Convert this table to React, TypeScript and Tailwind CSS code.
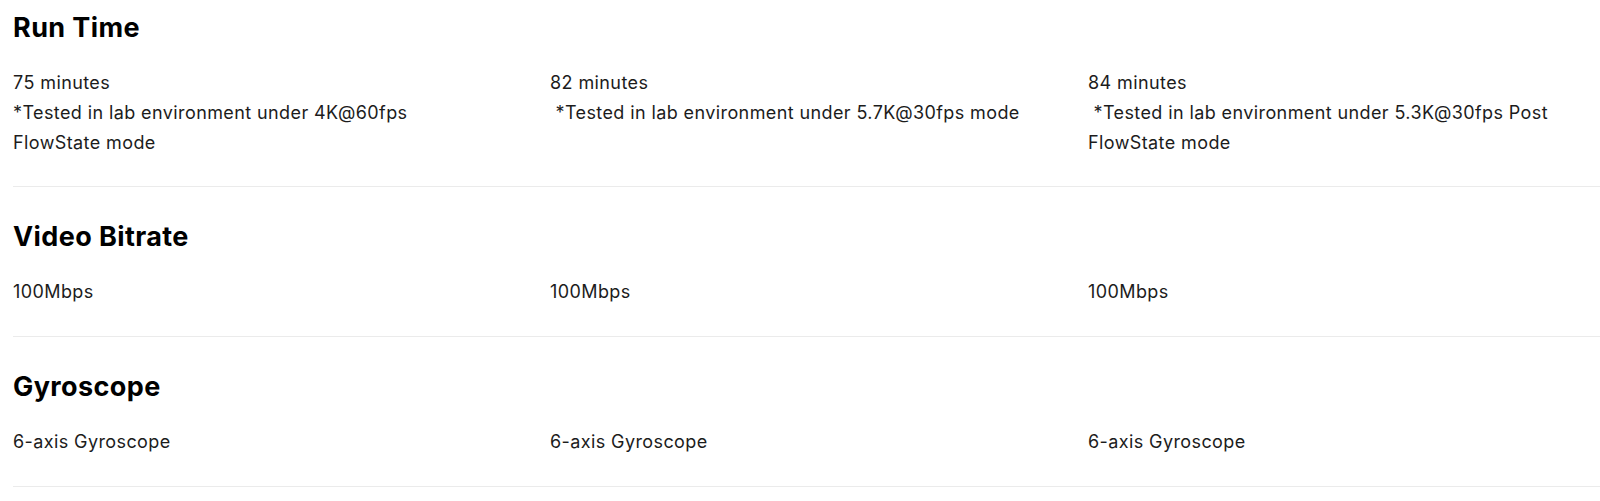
const specs = [
  {
    title: 'Run Time',
    first: true,
    cols: [
      ['75 minutes', '*Tested in lab environment under 4K@60fps', 'FlowState mode'],
      ['82 minutes', '\u00a0*Tested in lab environment under 5.7K@30fps mode'],
      ['84 minutes', '\u00a0*Tested in lab environment under 5.3K@30fps Post', 'FlowState mode'],
    ],
  },
  {
    title: 'Video Bitrate',
    cols: [['100Mbps'], ['100Mbps'], ['100Mbps']],
  },
  {
    title: 'Gyroscope',
    cols: [['6-axis Gyroscope'], ['6-axis Gyroscope'], ['6-axis Gyroscope']],
  },
];

const SpecRow = ({ title, cols, first }: { title: string; cols: string[][]; first?: boolean }) => (
  <section className={first ? 'border-b border-[#ebebeb] pt-[10px] pb-[28px]' : 'border-b border-[#ebebeb] pt-[32px] pb-[29px]'}>
    <h3 className="mb-[22px] text-[27px] leading-[36px] font-bold tracking-[0.4px] text-black">{title}</h3>
    <div className="grid grid-cols-[537px_538px_1fr]">
      {cols.map((lines, i) => (
        <div key={i} className="text-[18px] leading-[30px] tracking-[0.4px] text-[#1c1c1c]">
          {lines.map((l, j) => (
            <div key={j} className="whitespace-nowrap">
              {l}
            </div>
          ))}
        </div>
      ))}
    </div>
  </section>
);

export default function App() {
  return (
    <div className="h-[501px] w-[1600px] overflow-hidden bg-white font-['Inter',sans-serif]">
      <div className="ml-[13px]">
        {specs.map((s) => (
          <SpecRow key={s.title} title={s.title} cols={s.cols} first={s.first} />
        ))}
      </div>
    </div>
  );
}
